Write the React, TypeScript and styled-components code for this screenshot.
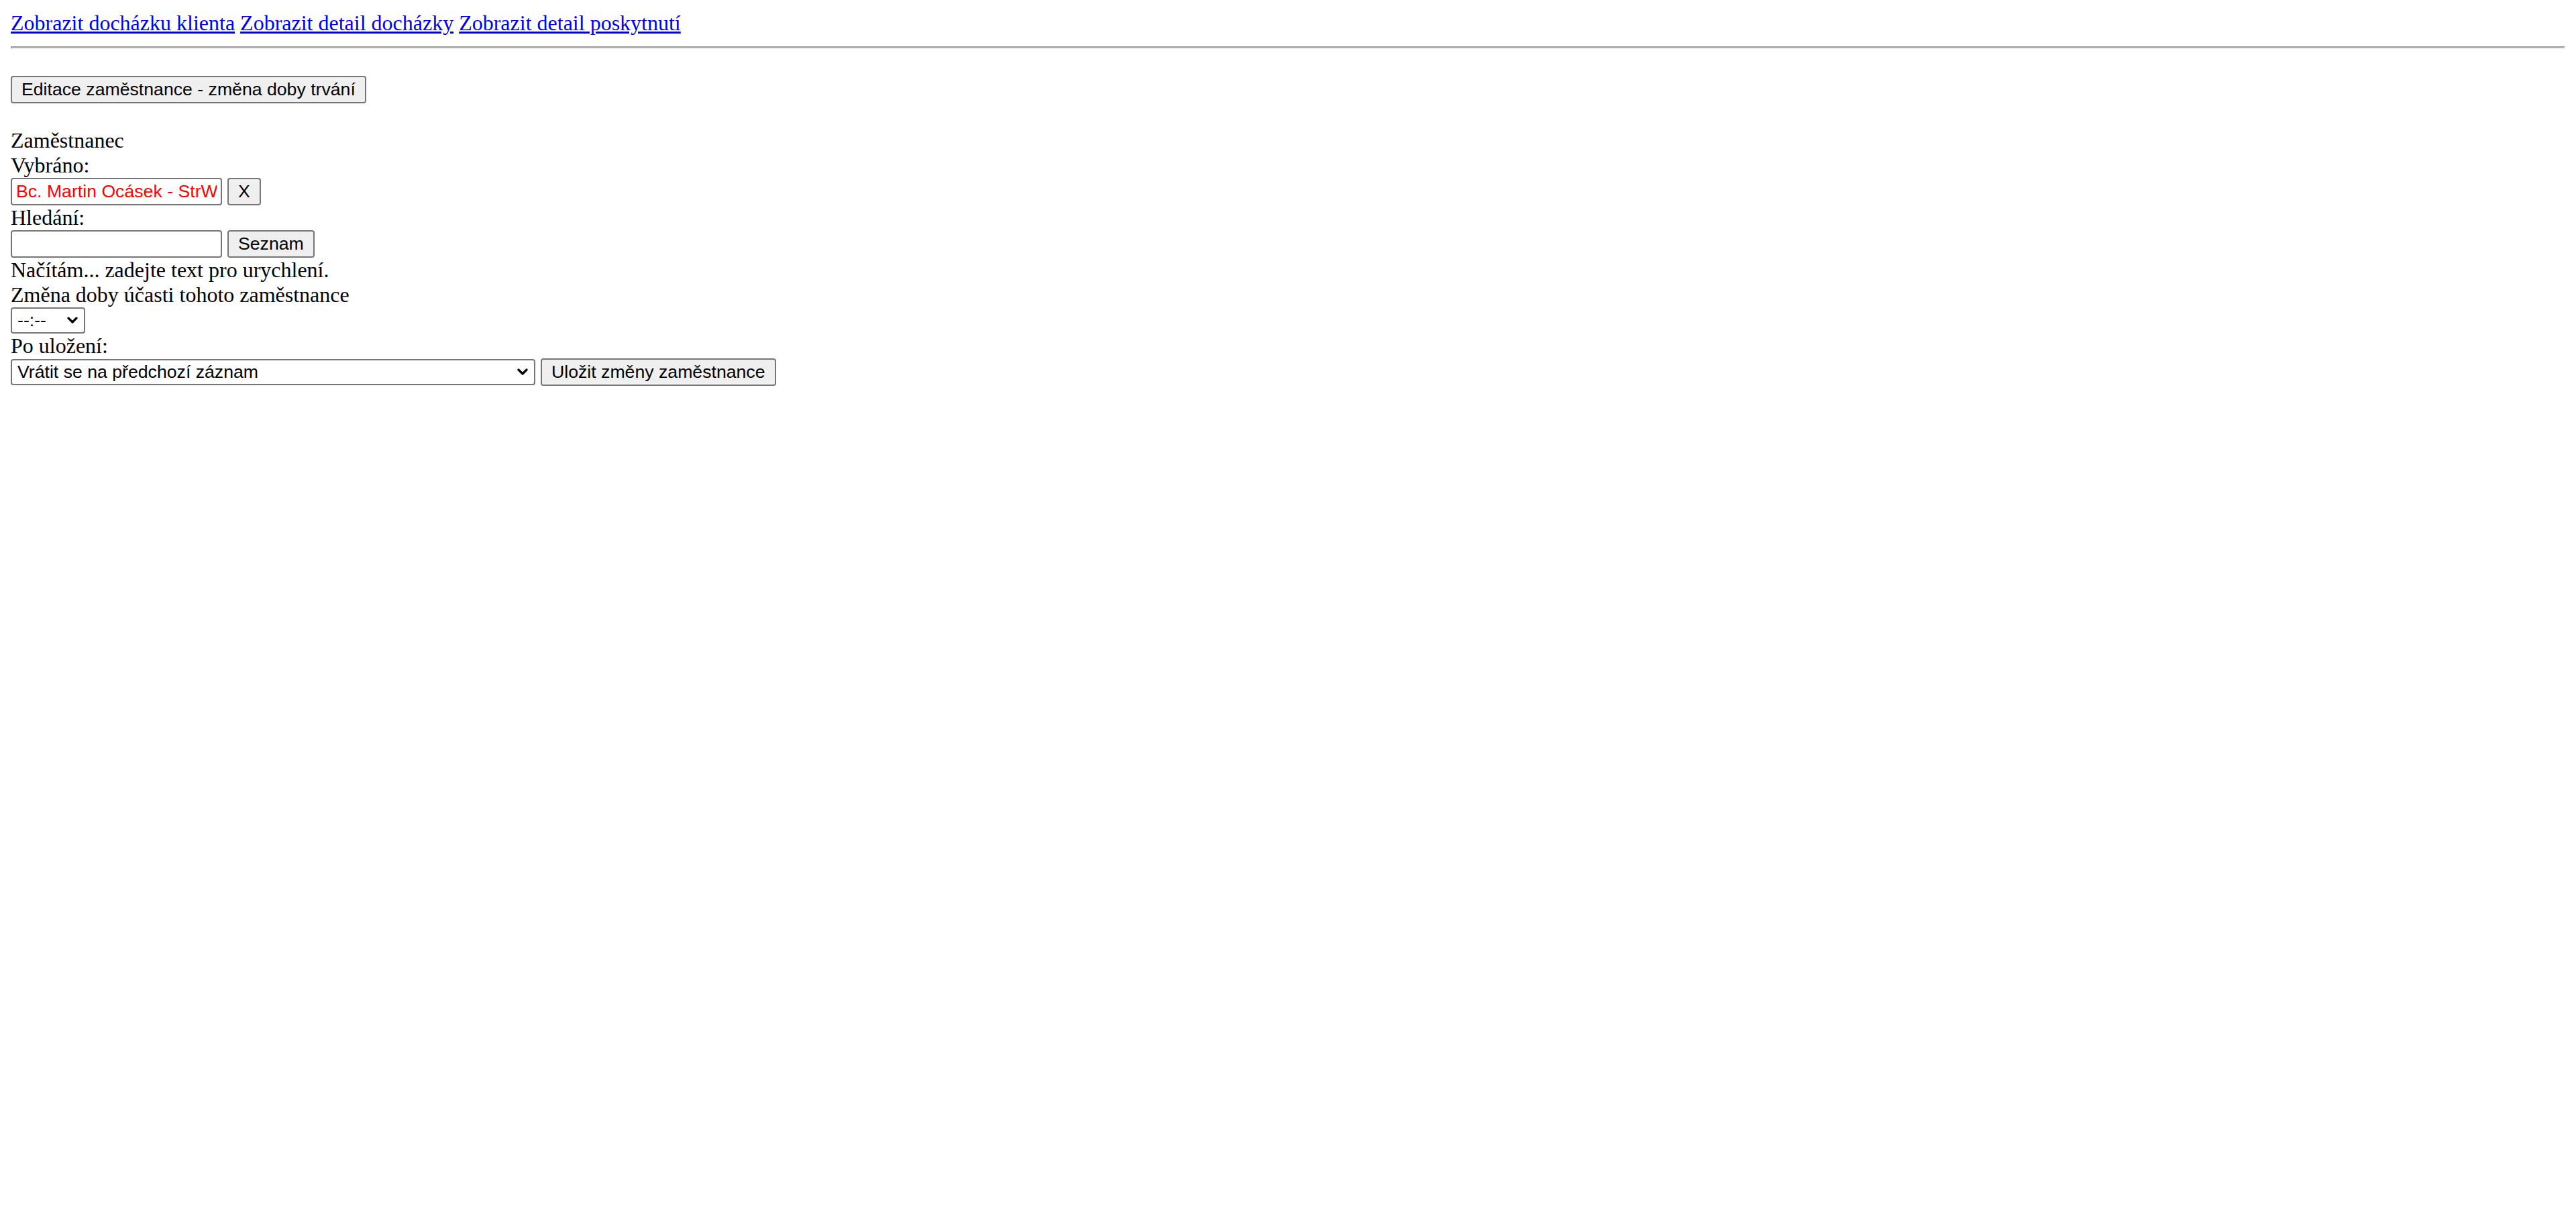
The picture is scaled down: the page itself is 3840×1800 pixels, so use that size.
import React from "react";
import styled, { createGlobalStyle } from "styled-components";

const GlobalStyle = createGlobalStyle`
  html, body {
    background: #ffffff;
  }
  body {
    margin: 16px;
    font-family: "Liberation Serif", "Times New Roman", serif;
    font-size: 32px;
    line-height: normal;
    color: #000000;
  }
`;

const NavBar = styled.nav`
  display: block;
`;

const NavLink = styled.a`
  color: #0000ee;
  text-decoration: underline;
  cursor: pointer;
`;

const Rule = styled.hr`
  margin: 16px 0 0;
  height: 0;
  border-style: solid;
  border-width: 2px;
  border-color: #9a9a9a #eeeeee #eeeeee #9a9a9a;
`;

const Form = styled.form`
  margin: 0;
  padding-top: 40px;
`;

const ActionRow = styled.div`
  display: flex;
  margin: 0 0 36.5px;
`;

const Line = styled.div`
  display: block;
`;

const ControlRow = styled.div`
  display: flex;
  align-items: center;
  gap: 8px;
`;

const controlFont = `
  font-family: "Liberation Sans", Arial, sans-serif;
  font-size: 26.667px;
  line-height: normal;
`;

const Button = styled.button`
  appearance: none;
  ${controlFont}
  box-sizing: border-box;
  height: 41px;
  color: #000000;
  background: #efefef;
  border: 2px solid #767676;
  border-radius: 4px;
  padding: 0 14px;
  margin: 0;
`;

const TextInput = styled.input<{ $accent?: boolean }>`
  appearance: none;
  ${controlFont}
  box-sizing: border-box;
  width: 315px;
  height: 41px;
  color: ${(p) => (p.$accent ? "#ff0000" : "#000000")};
  background: #ffffff;
  border: 2px solid #767676;
  border-radius: 4px;
  padding: 0 6px;
  margin: 0;
  outline: none;
`;

const SelectWrap = styled.span`
  display: block;
  position: relative;
`;

const Select = styled.select<{ $width: number }>`
  appearance: none;
  ${controlFont}
  display: block;
  box-sizing: border-box;
  width: ${(p) => p.$width}px;
  height: 39px;
  color: #000000;
  background: #ffffff;
  border: 2px solid #767676;
  border-radius: 4px;
  padding: 0 36px 0 8px;
  margin: 0;
  outline: none;
`;

const Chevron = styled.svg`
  position: absolute;
  right: 11px;
  top: 50%;
  width: 16px;
  height: 10px;
  margin-top: -5px;
  pointer-events: none;
`;

function DropDown({ width, options }: { width: number; options: string[] }) {
  return (
    <SelectWrap>
      <Select $width={width} defaultValue={options[0]}>
        {options.map((o) => (
          <option key={o} value={o}>
            {o}
          </option>
        ))}
      </Select>
      <Chevron viewBox="0 0 16 10" aria-hidden="true">
        <path
          d="M2 2 L8 8 L14 2"
          fill="none"
          stroke="#000"
          strokeWidth="3.2"
          strokeLinecap="round"
          strokeLinejoin="round"
        />
      </Chevron>
    </SelectWrap>
  );
}

export default function App() {
  return (
    <>
      <GlobalStyle />
      <NavBar>
        <NavLink>Zobrazit docházku klienta</NavLink>{" "}
        <NavLink>Zobrazit detail docházky</NavLink>{" "}
        <NavLink>Zobrazit detail poskytnutí</NavLink>
      </NavBar>
      <Rule />
      <Form onSubmit={(e) => e.preventDefault()}>
        <ActionRow>
          <Button type="button">Editace zaměstnance - změna doby trvání</Button>
        </ActionRow>
        <Line>Zaměstnanec</Line>
        <Line>Vybráno:</Line>
        <ControlRow>
          <TextInput $accent readOnly value="Bc. Martin Ocásek - StrW" />
          <Button type="button">X</Button>
        </ControlRow>
        <Line>Hledání:</Line>
        <ControlRow>
          <TextInput defaultValue="" />
          <Button type="button">Seznam</Button>
        </ControlRow>
        <Line>Načítám... zadejte text pro urychlení.</Line>
        <Line>Změna doby účasti tohoto zaměstnance</Line>
        <ControlRow>
          <DropDown width={111} options={["--:--"]} />
        </ControlRow>
        <Line>Po uložení:</Line>
        <ControlRow>
          <DropDown width={782} options={["Vrátit se na předchozí záznam"]} />
          <Button type="submit">Uložit změny zaměstnance</Button>
        </ControlRow>
      </Form>
    </>
  );
}
